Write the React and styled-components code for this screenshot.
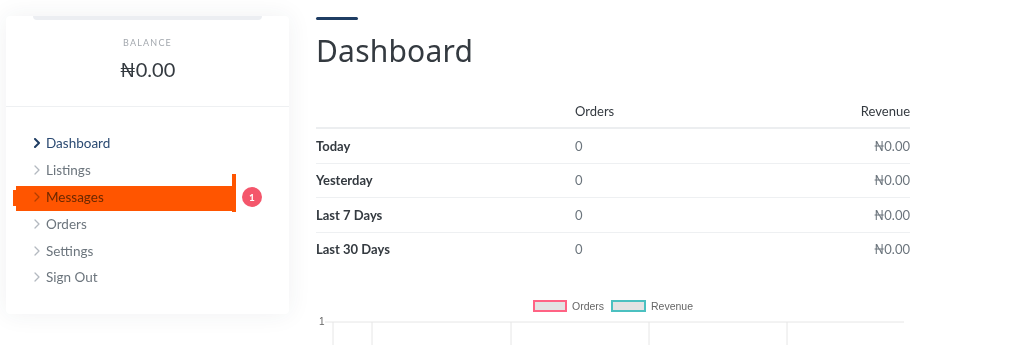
import React from 'react'
import styled, { createGlobalStyle } from 'styled-components'

const GlobalStyle = createGlobalStyle`
  body {
    margin: 0;
    background: #fff;
    font-family: "Lato", "Noto Sans", sans-serif;
    color: #343a40;
  }
`

const Page = styled.div`
  display: flex;
  align-items: flex-start;
  gap: 27px;
  padding: 16px 0 0 6px;
  height: 345px;
  box-sizing: border-box;
  overflow: hidden;
`

const Card = styled.aside`
  position: relative;
  width: 283px;
  flex-shrink: 0;
  background: #fff;
  border-radius: 4px;
  box-shadow: 0 0 24px rgba(40, 50, 70, 0.07);
`

const TopStrip = styled.div`
  height: 4px;
  margin: 0 27px;
  background: #eceef2;
  border-radius: 0 0 4px 4px;
`

const BalanceBox = styled.div`
  text-align: center;
  padding: 17px 0 24px;
  border-bottom: 1px solid #eef0f2;
`

const BalanceLabel = styled.div`
  font-size: 9px;
  line-height: 12px;
  letter-spacing: 1.2px;
  color: #a3a8ae;
  text-transform: uppercase;
`

const BalanceAmount = styled.div`
  margin-top: 7px;
  font-size: 20px;
  line-height: 26px;
  color: #343a40;
`

const Nav = styled.nav`
  padding: 23px 0 23px;
`

const NavItem = styled.div`
  display: flex;
  align-items: center;
  height: 26.8px;
  padding: 0 27px;
  font-size: 13.5px;
  color: ${p => (p.$active ? '#2b4a72' : '#6c757d')};
`

const Chevron = styled.svg`
  width: 8px;
  height: 10px;
  margin-right: 5px;
  flex-shrink: 0;
`

const Badge = styled.span`
  margin-left: auto;
  width: 20px;
  height: 20px;
  border-radius: 50%;
  background: #f4566b;
  color: #fff;
  font-size: 10px;
  font-weight: 700;
  display: flex;
  align-items: center;
  justify-content: center;
`

const Scribble = styled.div`
  position: absolute;
  left: 10px;
  top: 170px;
  width: 217px;
  height: 25px;
  background: #ff5500;
  mix-blend-mode: multiply;
  pointer-events: none;

  &::before {
    content: '';
    position: absolute;
    left: -3px;
    top: 4px;
    width: 3px;
    height: 16px;
    background: #ff5500;
  }

  &::after {
    content: '';
    position: absolute;
    right: -3px;
    top: -12px;
    width: 4px;
    height: 38px;
    background: #ff5500;
  }
`

const Main = styled.main`
  width: 594px;
  padding-top: 1px;
`

const Accent = styled.div`
  width: 42px;
  height: 3px;
  background: #1f3d63;
  border-radius: 2px;
`

const Title = styled.h1`
  margin: 13px 0 0;
  font-family: "Noto Sans", "Lato", sans-serif;
  font-weight: 400;
  font-size: 30px;
  line-height: 36px;
  color: #343a40;
  letter-spacing: 0.2px;
`

const Table = styled.div`
  margin-top: 25px;
  font-size: 13px;
`

const Row = styled.div`
  display: grid;
  grid-template-columns: 259px 1fr auto;
  align-items: center;
  height: ${p => (p.$head ? '33px' : '33.5px')};
  border-bottom: ${p => (p.$head ? '2px solid #eceef0' : p.$last ? 'none' : '1px solid #eef0f2')};
`

const Cell = styled.div`
  color: ${p => (p.$muted ? '#6c757d' : '#343a40')};
  font-weight: ${p => (p.$bold ? 700 : 400)};
  text-align: ${p => (p.$right ? 'right' : 'left')};
`

const ChartSvg = styled.svg`
  display: block;
  margin-top: 30px;
  width: 594px;
  height: 60px;
`

const rows = [
  { label: 'Today' },
  { label: 'Yesterday' },
  { label: 'Last 7 Days' },
  { label: 'Last 30 Days' }
]

const navItems = ['Dashboard', 'Listings', 'Messages', 'Orders', 'Settings', 'Sign Out']

const Arrow = ({ active }) => (
  <Chevron viewBox="0 0 8 10">
    <polyline
      points="2,1 6,5 2,9"
      fill="none"
      stroke={active ? '#1f3d63' : '#b3b9c0'}
      strokeWidth={active ? 2 : 1.3}
      strokeLinecap="round"
      strokeLinejoin="round"
    />
  </Chevron>
)

const Chart = () => (
  <ChartSvg viewBox="0 0 594 60">
    <rect x="218" y="5" width="32" height="10" fill="#e3e3e3" stroke="#ff6384" strokeWidth="2" />
    <text x="256" y="13.5" fontSize="10.5" fill="#666" fontFamily="Liberation Sans, Arial, sans-serif">Orders</text>
    <rect x="296" y="5" width="33" height="10" fill="#e3e3e3" stroke="#4bc0c0" strokeWidth="2" />
    <text x="335" y="13.5" fontSize="10.5" fill="#666" fontFamily="Liberation Sans, Arial, sans-serif">Revenue</text>
    <text x="3" y="29" fontSize="10" fill="#666" fontFamily="Liberation Sans, Arial, sans-serif">1</text>
    <line x1="9" y1="26" x2="588" y2="26" stroke="#e6e6e6" />
    {[17, 56, 195, 333, 471].map(x => (
      <line key={x} x1={x} y1="26" x2={x} y2="60" stroke="#e6e6e6" />
    ))}
  </ChartSvg>
)

export default function App() {
  return (
    <>
      <GlobalStyle />
      <Page>
        <Card>
          <TopStrip />
          <BalanceBox>
            <BalanceLabel>Balance</BalanceLabel>
            <BalanceAmount>₦0.00</BalanceAmount>
          </BalanceBox>
          <Nav>
            {navItems.map((item, i) => (
              <NavItem key={item} $active={i === 0}>
                <Arrow active={i === 0} />
                {item}
                {item === 'Messages' && <Badge>1</Badge>}
              </NavItem>
            ))}
          </Nav>
          <Scribble />
        </Card>
        <Main>
          <Accent />
          <Title>Dashboard</Title>
          <Table>
            <Row $head>
              <Cell />
              <Cell>Orders</Cell>
              <Cell $right>Revenue</Cell>
            </Row>
            {rows.map((r, i) => (
              <Row key={r.label} $last={i === rows.length - 1}>
                <Cell $bold>{r.label}</Cell>
                <Cell $muted>0</Cell>
                <Cell $muted $right>₦0.00</Cell>
              </Row>
            ))}
          </Table>
          <Chart />
        </Main>
      </Page>
    </>
  )
}
